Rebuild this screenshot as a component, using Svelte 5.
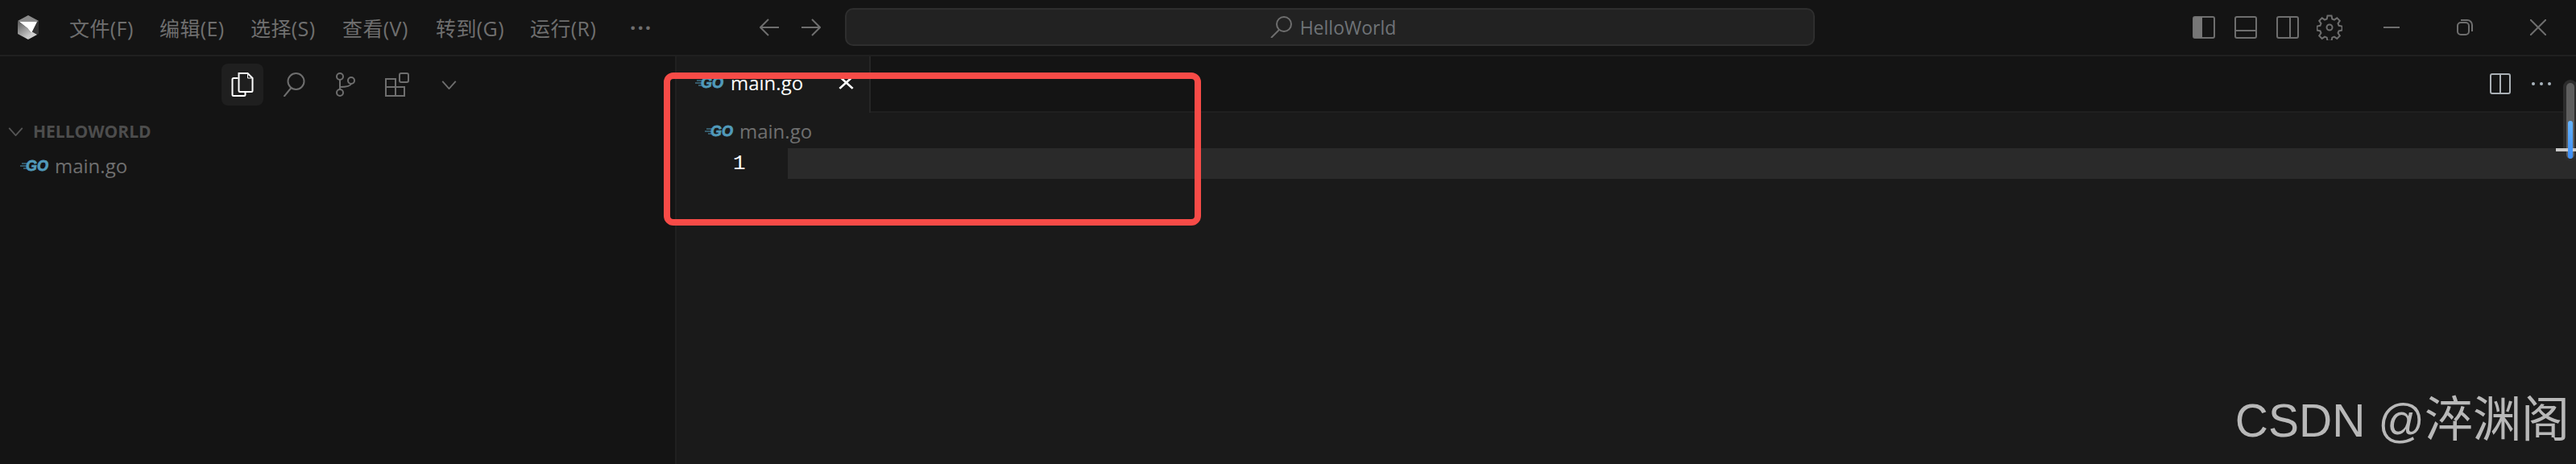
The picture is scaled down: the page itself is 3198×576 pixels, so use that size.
<script lang="ts">
  // widths keep each menu entry on the reference's pitch
  const menus = [
    { label: '文件(F)', width: 79 },
    { label: '编辑(E)', width: 80 },
    { label: '选择(S)', width: 81 },
    { label: '查看(V)', width: 83 },
    { label: '转到(G)', width: 84 },
    { label: '运行(R)', width: 83 }
  ]
</script>

{#snippet goIcon()}
  <svg class="go" viewBox="0 0 36 13" aria-hidden="true">
    <path d="M2 4h7M0 7h8M4 10h4" stroke="#519aba" stroke-width="1" fill="none" />
    <text x="7" y="13" class="go-text">GO</text>
  </svg>
{/snippet}

<div class="window">
  <header class="titlebar">
    <svg class="logo" viewBox="0 0 26 30" aria-hidden="true">
      <defs>
        <linearGradient id="logo-side" x1="0" y1="0" x2="0.6" y2="1">
          <stop offset="0" stop-color="#5a5a5a" />
          <stop offset="1" stop-color="#d0d0d0" />
        </linearGradient>
      </defs>
      <path d="M13 0 26 7v16L13 30 0 23V7z" fill="#333" />
      <path d="M13 0 0 7l2 1h22l2-1z" fill="#8c8c8c" />
      <path d="M2 8h22l-7 14-5-6z" fill="#fff" />
      <path d="M0 8l2 0 10 8 5 6-4 8-13-7z" fill="url(#logo-side)" />
      <path d="M17 20l7 4-11 6z" fill="#cfcfcf" />
    </svg>
    <nav class="menu">
      {#each menus as item}
        <span style="width: {item.width}px">{item.label}</span>
      {/each}
      <span class="menu-more">···</span>
    </nav>
    <div class="nav-arrows">
      <svg viewBox="0 0 24 22" aria-hidden="true"><path d="M24 11H1M11 1 1 11l10 10" /></svg>
      <svg viewBox="0 0 24 22" aria-hidden="true"><path d="M0 11h23M13 1l10 10-10 10" /></svg>
    </div>
    <div class="search">
      <svg viewBox="0 0 27 27" aria-hidden="true"><circle cx="17" cy="10" r="9" /><path d="M11 17 1 27" /></svg>
      <span>HelloWorld</span>
    </div>
    <div class="layout-icons">
      <svg viewBox="0 0 28 28" aria-hidden="true"><rect x="1" y="1" width="26" height="26" rx="2" /><path d="M1 3a2 2 0 0 1 2-2h9v26H3a2 2 0 0 1-2-2z" class="fill" /></svg>
      <svg viewBox="0 0 28 28" aria-hidden="true"><rect x="1" y="1" width="26" height="26" rx="2" /><path d="M1 18h26" /></svg>
      <svg viewBox="0 0 28 28" aria-hidden="true"><rect x="1" y="1" width="26" height="26" rx="2" /><path d="M17 1v26" /></svg>
      <svg class="gear" viewBox="0 0 32 32" aria-hidden="true">
        <path d="M13.5 1.5h5l.8 4 2.6 1.100 3.400-2.300 3.500 3.500-2.300 3.400 1.100 2.600 4 .8v5l-4 .8-1.100 2.600 2.300 3.400-3.500 3.500-3.400-2.300-2.600 1.100-.8 4h-5l-.8-4-2.600-1.100-3.400 2.300-3.500-3.500 2.300-3.400-1.100-2.600-4-.8v-5l4-.8 1.100-2.600-2.300-3.400 3.500-3.500 3.400 2.300 2.600-1.100z" />
        <circle cx="16" cy="16" r="3.500" />
      </svg>
    </div>
    <div class="window-controls">
      <svg viewBox="0 0 20 20" aria-hidden="true"><path d="M0 10h20" /></svg>
      <svg viewBox="0 0 20 20" aria-hidden="true"><rect x="1" y="4" width="14" height="15" rx="4" /><path d="M5 1h8a6 6 0 0 1 6 6v8" /></svg>
      <svg viewBox="0 0 20 20" aria-hidden="true"><path d="M0 0l20 20M20 0 0 20" /></svg>
    </div>
  </header>

  <div class="body">
    <aside class="sidebar">
      <div class="activity">
        <span class="activity-item active">
          <svg viewBox="0 0 27 30" aria-hidden="true">
            <path d="M8 7H2.500A1.500 1.500 0 0 0 1 8.500v19A1.500 1.500 0 0 0 2.500 29h13a1.500 1.500 0 0 0 1.500-1.500V24" />
            <path d="M9 1h11l6 6v15.500a1.500 1.500 0 0 1-1.500 1.500h-14A1.500 1.500 0 0 1 9 22.500z" />
            <path d="M20 2v5h5" class="thin" />
          </svg>
        </span>
        <span class="activity-item">
          <svg viewBox="0 0 27 30" aria-hidden="true"><circle cx="16" cy="11" r="10" /><path d="M10 19 1 30" /></svg>
        </span>
        <span class="activity-item">
          <svg viewBox="0 0 24 30" aria-hidden="true"><circle cx="5" cy="5" r="4" /><circle cx="5" cy="25" r="4" /><circle cx="19" cy="10" r="4" /><path d="M5 9v12M5 18c8 0 13-1 14-4" /></svg>
        </span>
        <span class="activity-item">
          <svg viewBox="0 0 30 30" aria-hidden="true"><path d="M1 8h12v21H1zM1 18h23v11H13M13 18v11" /><rect x="18" y="1" width="11" height="11" rx="2" /></svg>
        </span>
        <span class="activity-item chevron">
          <svg viewBox="0 0 20 12" aria-hidden="true"><path d="M1 1l9 10 9-10" /></svg>
        </span>
      </div>
      <div class="section-head">
        <svg viewBox="0 0 20 12" aria-hidden="true"><path d="M1 1l9 10 9-10" /></svg>
        <span>HELLOWORLD</span>
      </div>
      <div class="file-row">
        {@render goIcon()}
        <span>main.go</span>
      </div>
    </aside>

    <main class="editor">
      <div class="tabs">
        <div class="tab">
          {@render goIcon()}
          <span>main.go</span>
          <svg class="close" viewBox="0 0 14 14" preserveAspectRatio="none" aria-hidden="true"><path d="M1 1l12 12M13 1 1 13" /></svg>
        </div>
        <div class="tab-actions">
          <svg class="split" viewBox="0 0 26 26" aria-hidden="true"><rect x="1" y="1" width="24" height="24" rx="2" /><path d="M13 1v24" /></svg>
          <svg class="dots" viewBox="0 0 24 4" aria-hidden="true"><circle cx="2" cy="2" r="2" /><circle cx="12" cy="2" r="2" /><circle cx="22" cy="2" r="2" /></svg>
        </div>
      </div>
      <div class="breadcrumb">
        {@render goIcon()}
        <span>main.go</span>
      </div>
      <div class="code-line">
        <span class="line-no">1</span>
        <div class="line-highlight"></div>
      </div>
      <div class="watermark">CSDN @<span>淬渊阁</span></div>
    </main>
  </div>

  <div class="highlight-box"></div>
  <div class="minimap">
    <div class="minimap-track"><div class="minimap-thumb"></div></div>
    <div class="minimap-marker"></div>
  </div>
</div>

<style>
  :global(body) {
    margin: 0;
    background: #1a1a1a;
  }

  .window {
    position: relative;
    width: 3198px;
    height: 576px;
    overflow: hidden;
    display: flex;
    flex-direction: column;
    background: #1a1a1a;
    font-family: 'Open Sans', 'Noto Sans CJK SC', sans-serif;
  }

  svg {
    display: block;
    fill: none;
    stroke: #6e6e6e;
    stroke-width: 2;
  }

  .titlebar {
    height: 68px;
    flex: none;
    display: flex;
    align-items: center;
    background: #141414;
    border-bottom: 2px solid #202020;
  }

  .logo {
    width: 26px;
    height: 30px;
    margin-left: 22px;
    stroke: none;
    flex: none;
  }
  .logo path {
    stroke: none;
  }

  .menu {
    display: flex;
    align-items: center;
    gap: 33px;
    width: 857px;
    margin-left: 38px;
    font-size: 25px;
    letter-spacing: 0.4px;
    color: #6f6f6f;
    white-space: nowrap;
    flex: none;
  }
  .menu .menu-more {
    margin-left: 8px;
    font-size: 26px;
    font-weight: 700;
    letter-spacing: 2px;
  }

  .nav-arrows {
    display: flex;
    gap: 28px;
    flex: none;
  }
  .nav-arrows svg {
    width: 24px;
    height: 22px;
  }

  .search {
    width: 1204px;
    height: 47px;
    box-sizing: border-box;
    margin-left: 30px;
    margin-top: -1px;
    flex: none;
    display: flex;
    align-items: center;
    justify-content: center;
    gap: 10px;
    background: #222222;
    border: 2px solid #2e2e2e;
    border-radius: 10px;
    color: #6f7377;
    font-size: 23px;
    padding-left: 8px;
  }
  .search svg {
    width: 27px;
    height: 27px;
  }

  .layout-icons {
    margin-left: 469px;
    display: flex;
    gap: 24px;
    align-items: center;
    flex: none;
  }
  .layout-icons svg {
    width: 28px;
    height: 28px;
  }
  .layout-icons svg.gear {
    width: 32px;
    height: 32px;
    margin-left: -2px;
  }
  .layout-icons .fill {
    fill: #777777;
    stroke: none;
  }

  .window-controls {
    margin-left: 51px;
    display: flex;
    gap: 71px;
    flex: none;
  }
  .window-controls svg {
    width: 20px;
    height: 20px;
  }

  .body {
    flex: 1;
    display: flex;
    min-height: 0;
  }

  .sidebar {
    width: 838px;
    flex: none;
    background: #141414;
    border-right: 2px solid #202020;
  }

  .activity {
    display: flex;
    align-items: center;
    height: 52px;
    margin-top: 9px;
    padding-left: 275px;
    gap: 12px;
  }
  .activity-item {
    width: 52px;
    height: 52px;
    border-radius: 8px;
    display: flex;
    align-items: center;
    justify-content: center;
  }
  .activity-item.active {
    background: #1f1f1f;
  }
  .activity-item.active svg {
    stroke: #ffffff;
  }
  .activity-item.active svg .thin {
    stroke-width: 1;
  }
  .activity-item svg {
    width: 30px;
    height: 30px;
  }
  .activity-item.chevron svg {
    width: 19px;
    height: 11px;
  }

  .section-head {
    display: flex;
    align-items: center;
    gap: 12px;
    margin-top: 17px;
    padding-left: 10px;
    font-size: 21px;
    font-weight: 700;
    color: #4d4d4d;
    height: 30px;
  }
  .section-head svg {
    width: 19px;
    height: 11px;
    stroke: #555555;
  }

  .file-row {
    display: flex;
    align-items: center;
    gap: 7px;
    margin-top: 12px;
    padding-left: 25px;
    font-size: 24px;
    color: #6f6f6f;
    height: 30px;
  }

  .go {
    width: 36px;
    height: 13px;
    flex: none;
    stroke: none;
    overflow: visible;
  }
  .go-text {
    font-family: 'Liberation Sans', sans-serif;
    font-size: 18px;
    font-weight: 700;
    font-style: italic;
    fill: #519aba;
    stroke: #519aba;
    stroke-width: 0.8;
  }

  .editor {
    flex: 1;
    position: relative;
    display: flex;
    flex-direction: column;
    min-width: 0;
  }

  .tabs {
    height: 68px;
    flex: none;
    display: flex;
    justify-content: space-between;
    background: #141414;
    border-bottom: 2px solid #202020;
  }

  .tab {
    width: 241px;
    height: 70px;
    box-sizing: border-box;
    display: flex;
    align-items: center;
    background: #1a1a1a;
    border-right: 2px solid #262626;
    padding: 0 0 6px 23px;
    font-size: 24px;
    color: #ffffff;
    gap: 8px;
  }
  .tab .close {
    width: 19px;
    height: 17px;
    margin-left: 36px;
    stroke: #ffffff;
    stroke-width: 2;
  }

  .tab-actions {
    display: flex;
    align-items: center;
    gap: 26px;
    padding-right: 31px;
  }
  .split {
    width: 26px;
    height: 26px;
    stroke: #aab0b5;
  }
  .dots {
    width: 24px;
    height: 4px;
    stroke: none;
    fill: #a9b4bd;
  }

  .breadcrumb {
    display: flex;
    align-items: center;
    gap: 7px;
    height: 44px;
    padding-left: 35px;
    font-size: 24px;
    color: #6f6f6f;
  }

  .code-line {
    display: flex;
    height: 38px;
  }
  .line-no {
    width: 138px;
    box-sizing: border-box;
    padding-left: 70px;
    flex: none;
    font-family: 'Liberation Mono', monospace;
    font-size: 26px;
    line-height: 38px;
    color: #ffffff;
  }
  .line-highlight {
    flex: 1;
    background: #2a2a2a;
  }

  .watermark {
    position: absolute;
    right: 8px;
    bottom: 24px;
    font-family: 'Liberation Sans', 'Noto Sans CJK SC', sans-serif;
    font-size: 57px;
    line-height: 1;
    color: #b8b8b8;
    white-space: nowrap;
  }
  .watermark span {
    font-size: 60px;
  }

  /* red annotation drawn over the screenshot */
  .highlight-box {
    position: absolute;
    left: 824px;
    top: 90px;
    width: 667px;
    height: 190px;
    box-sizing: border-box;
    border: 8px solid #f74b47;
    border-radius: 12px;
  }

  .minimap {
    position: absolute;
    left: 3173px;
    top: 99px;
    width: 25px;
    height: 101px;
  }
  .minimap-marker {
    position: absolute;
    left: 0;
    top: 85px;
    width: 25px;
    height: 4px;
    background: #c8c8c8;
  }
  .minimap-track {
    position: absolute;
    left: 13px;
    top: 4px;
    width: 10px;
    height: 94px;
    border-radius: 5px;
    background: #5e5e5e;
    box-shadow: 0 0 0 4px #2c2c2c;
  }
  .minimap-thumb {
    position: absolute;
    z-index: 1;
    left: 2px;
    top: 47px;
    width: 6px;
    height: 47px;
    border-radius: 3px;
    background: linear-gradient(#66b5ff, #3d8df5);
  }
</style>
